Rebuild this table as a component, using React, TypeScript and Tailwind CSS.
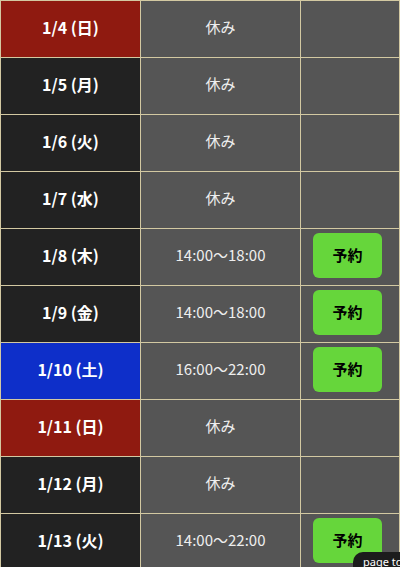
import React from 'react';

type Row = { date: string; kind: 'sun' | 'sat' | 'day'; time: string | null };

const rows: Row[] = [
  { date: '1/4 (日)', kind: 'sun', time: null },
  { date: '1/5 (月)', kind: 'day', time: null },
  { date: '1/6 (火)', kind: 'day', time: null },
  { date: '1/7 (水)', kind: 'day', time: null },
  { date: '1/8 (木)', kind: 'day', time: '14:00〜18:00' },
  { date: '1/9 (金)', kind: 'day', time: '14:00〜18:00' },
  { date: '1/10 (土)', kind: 'sat', time: '16:00〜22:00' },
  { date: '1/11 (日)', kind: 'sun', time: null },
  { date: '1/12 (月)', kind: 'day', time: null },
  { date: '1/13 (火)', kind: 'day', time: '14:00〜22:00' },
];

const dateBg = {
  sun: 'bg-[#8f1a10]',
  sat: 'bg-[#0e2fc9]',
  day: 'bg-[#222222]',
};

const App = () => {
  return (
    <div className="relative w-[400px] h-[567px] overflow-hidden bg-[#555555] font-['Noto_Sans_CJK_JP','Noto_Sans',sans-serif]">
      <table className="w-[399px] border-collapse table-fixed">
        <colgroup>
          <col className="w-[140px]" />
          <col className="w-[160px]" />
          <col className="w-[99px]" />
        </colgroup>
        <tbody>
          {rows.map((r) => (
            <tr key={r.date} className="h-[57px]">
              <td className={`${dateBg[r.kind]} border border-[#d3c9a2] text-center text-white font-bold text-[16px] pb-[4px]`}>
                {r.date}
              </td>
              <td className="bg-[#555555] border border-[#d3c9a2] text-center text-[#eeeeee] text-[15px] pb-[4px]">
                {r.time ?? '休み'}
              </td>
              <td className="bg-[#555555] border border-[#d3c9a2] p-0">
                {r.time && (
                  <div className="flex pl-[12px] pb-[4px]">
                    <button className="w-[69px] h-[45px] rounded-md bg-[#66d63b] text-black font-bold text-[15px]">
                      予約
                    </button>
                  </div>
                )}
              </td>
            </tr>
          ))}
        </tbody>
      </table>

      {/* page top */}
      <div className="absolute left-[353px] top-[552px] w-[70px] h-[30px] rounded-tl-[10px] bg-[#1c1c1c] px-[10px] pt-[2px] text-[11px] text-white font-['Noto_Sans',sans-serif]">
        page top
      </div>
    </div>
  );
};

export default App;
